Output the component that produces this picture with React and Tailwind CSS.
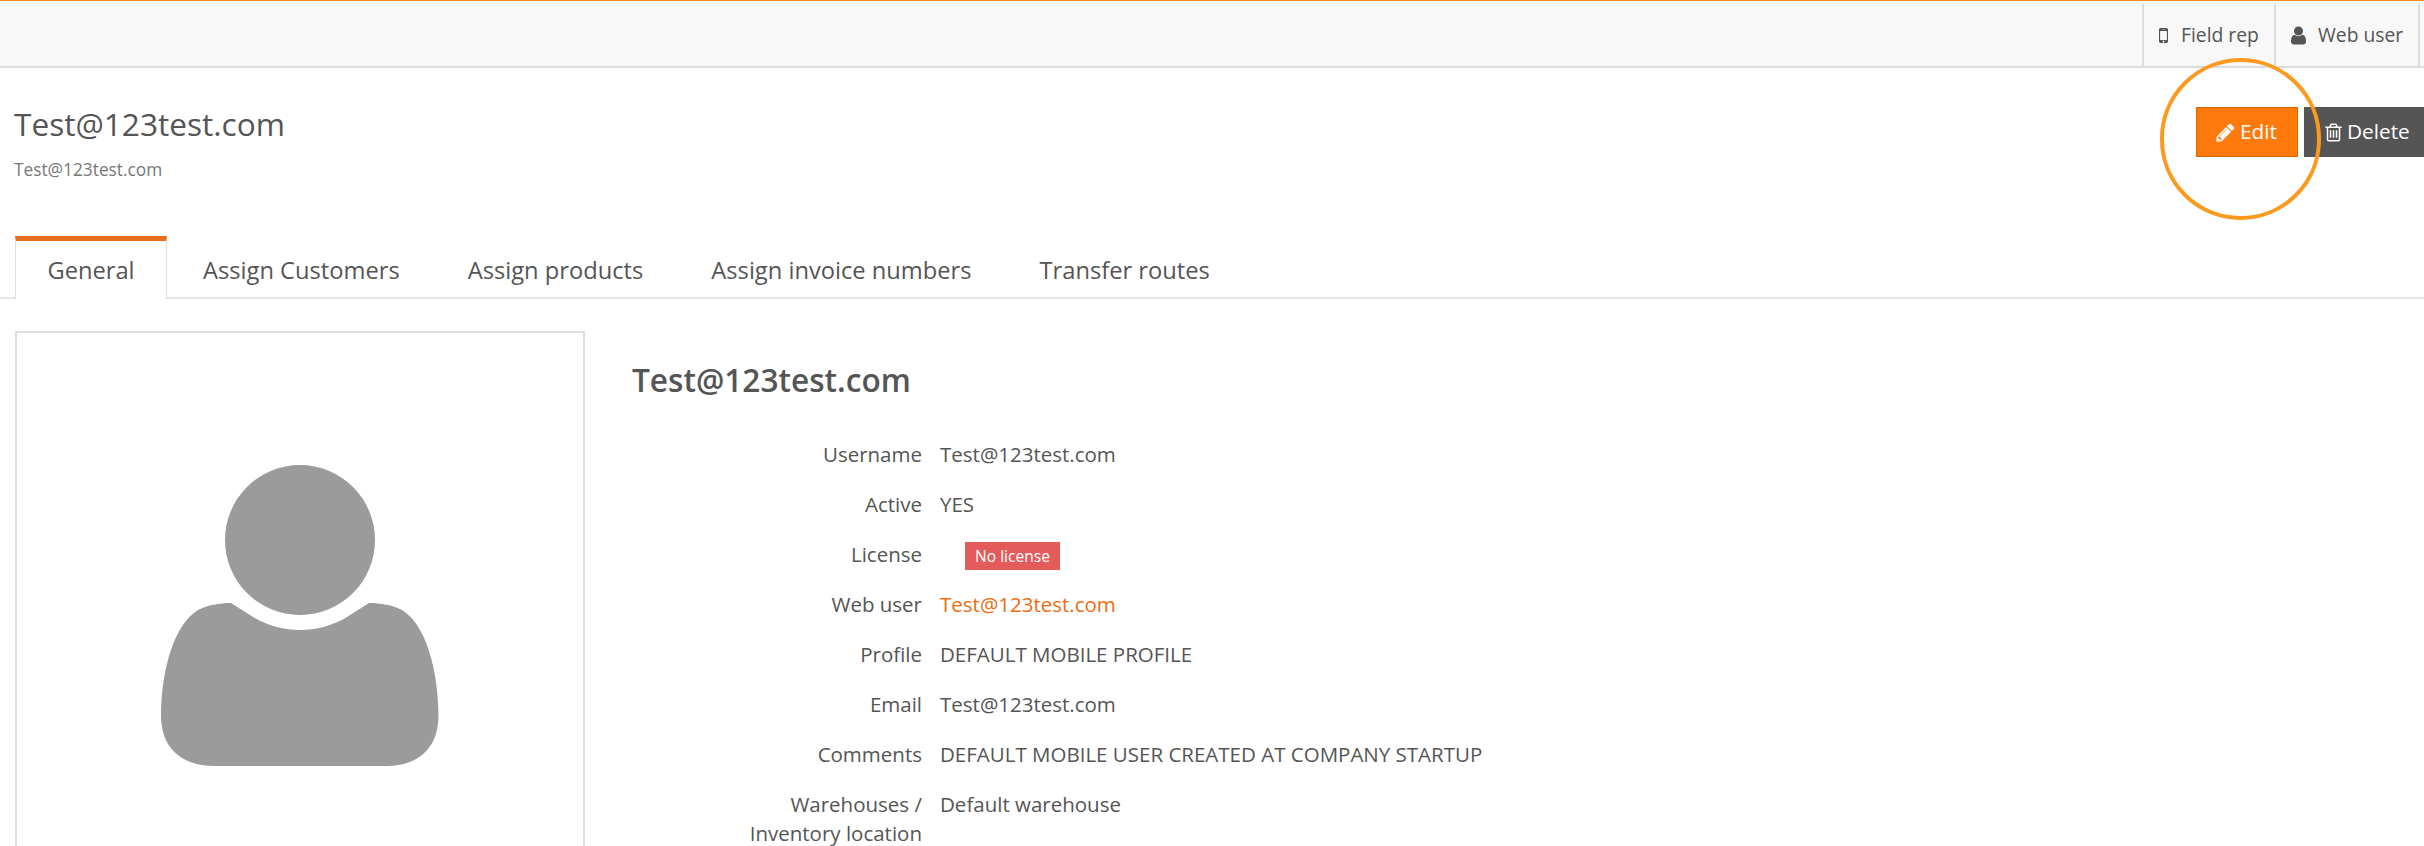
const rows = [
  { label: "Username", value: "Test@123test.com" },
  { label: "Active", value: "YES" },
  { label: "License", badge: "No license" },
  { label: "Web user", value: "Test@123test.com", link: true },
  { label: "Profile", value: "DEFAULT MOBILE PROFILE" },
  { label: "Email", value: "Test@123test.com" },
  { label: "Comments", value: "DEFAULT MOBILE USER CREATED AT COMPANY STARTUP" },
  { label: "Warehouses / Inventory location", value: "Default warehouse" },
];

const tabs = ["Assign Customers", "Assign products", "Assign invoice numbers", "Transfer routes"];

const Icon = ({ d }) => (
  <svg className="h-[21px] w-[21px] shrink-0" viewBox="0 0 1792 1792" fill="currentColor">
    <path d={d} />
  </svg>
);

const mobilePath = "M976 1408q0-33-23.500-56.500t-56.500-23.500-56.500 23.500-23.500 56.500 23.500 56.500 56.500 23.500 56.500-23.500 23.500-56.500zm208-160v-704q0-13-9.500-22.500t-22.500-9.500h-512q-13 0-22.500 9.500t-9.500 22.500v704q0 13 9.500 22.500t22.500 9.500h512q13 0 22.500-9.500t9.500-22.500zm-192-848q0-16-16-16h-160q-16 0-16 16t16 16h160q16 0 16-16zm288-16v1024q0 52-38 90t-90 38h-512q-52 0-90-38t-38-90v-1024q0-52 38-90t90-38h512q52 0 90 38t38 90z";
const userPath = "M1536 1399q0 109-62.500 187t-150.500 78h-854q-88 0-150.500-78t-62.500-187q0-85 8.500-160.500t31.500-152 58.500-131 94-89 134.500-34.500q131 128 313 128t313-128q76 0 134.500 34.500t94 89 58.500 131 31.500 152 8.500 160.500zm-256-887q0 159-112.500 271.500t-271.500 112.500-271.500-112.500-112.500-271.500 112.500-271.500 271.500-112.500 271.500 112.500 112.500 271.500z";
const pencilPath = "M491 1536l91-91-235-235-91 91v107h128v128h107zm523-928q0-22-22-22-10 0-17 7l-542 542q-7 7-7 17 0 22 22 22 10 0 17-7l542-542q7-7 7-17zm-54-192l416 416-832 832h-416v-416zm683 96q0 53-37 90l-166 166-416-416 166-165q36-38 90-38 53 0 91 38l235 234q37 39 37 91z";
const trashPath = "M704 736v576q0 14-9 23t-23 9h-64q-14 0-23-9t-9-23v-576q0-14 9-23t23-9h64q14 0 23 9t9 23zm256 0v576q0 14-9 23t-23 9h-64q-14 0-23-9t-9-23v-576q0-14 9-23t23-9h64q14 0 23 9t9 23zm256 0v576q0 14-9 23t-23 9h-64q-14 0-23-9t-9-23v-576q0-14 9-23t23-9h64q14 0 23 9t9 23zm128 724v-948h-896v948q0 22 7 40.500t14.500 27 10.500 8.500h832q3 0 10.500-8.500t14.500-27 7-40.500zm-672-1076h448l-48-117q-7-9-17-11h-317q-10 2-17 11zm928 32v64q0 14-9 23t-23 9h-96v948q0 83-47 143.500t-113 60.500h-832q-66 0-113-58.500t-47-141.500v-952h-96q-14 0-23-9t-9-23v-64q0-14 9-23t23-9h309l70-167q15-37 54-63t79-26h320q40 0 79 26t54 63l70 167h309q14 0 23 9t9 23z";

const Avatar = () => (
  <svg className="w-[280px] h-[306px]" viewBox="160 460 280 306" fill="#9b9b9b">
    <circle cx="300" cy="538" r="75" />
    <path d="M231 601 L253 615 C268 624 284 628 300 628 C316 628 332 624 347 615 L369 601 C381 601 392 603 402 608 C425 622 438 665 438.5 713 C438.5 745 420 764 386 764 L215 764 C180 764 161 745 161 713 C161.500 665 175 622 198 608 C208 603 219 601 231 601 Z" />
  </svg>
);

const App = () => {
  return (
    <div className="relative h-[846px] w-[2424px] overflow-hidden bg-white text-[#555] font-['Open_Sans',sans-serif]">
      <div className="flex h-[68px] justify-end border-t border-b-2 border-t-[#ff8a1e] border-b-[#dcdcdc] bg-[#f8f8f8] pr-1 pt-[3px]">
        <div className="flex h-full w-[132px] items-center gap-[7px] border-l-2 border-[#dcdcdc] pl-[9px] text-[19.300px]">
          <Icon d={mobilePath} />
          <span>Field rep</span>
        </div>
        <div className="flex h-full w-[146px] items-center gap-[9px] border-x-2 border-[#dcdcdc] pl-[12px] text-[19.300px]">
          <Icon d={userPath} />
          <span>Web user</span>
        </div>
      </div>

      <div className="flex h-[168px] justify-between">
        <div className="pl-[14px] pt-[35px]">
          <h1 className="text-[31.600px] leading-[42px]">Test@123test.com</h1>
          <p className="mt-[15px] text-[17.300px] leading-[20px] text-[#777]">Test@123test.com</p>
        </div>
        <div className="flex gap-[6px] pt-[39px]">
          <button className="flex h-[50px] w-[102px] items-center gap-[4px] border border-[#e56b00] bg-[#ff7a0c] pl-[18px] text-[20.800px] text-white">
            <Icon d={pencilPath} />
            Edit
          </button>
          <button className="flex h-[50px] w-[120px] items-center gap-[3px] bg-[#555] pl-[19px] text-[20.800px] text-white">
            <Icon d={trashPath} />
            Delete
          </button>
        </div>
      </div>

      <div className="flex h-[63px] border-b-2 border-[#e4e4e4] pl-[15px]">
        <div className="mr-[2px] h-[63px] w-[152px] border-x border-t-[5px] border-x-[#e0e0e0] border-t-[#e46d1e] bg-white pt-[13px] text-center text-[23.700px] leading-[32px]">
          General
        </div>
        {tabs.map((tab) => (
          <div key={tab} className="px-[34px] pt-[18px] text-[23.700px] leading-[32px]">
            {tab}
          </div>
        ))}
      </div>

      <div className="flex pl-[15px] pt-[32px]">
        <div className="flex h-[568px] w-[570px] shrink-0 items-center justify-center border-2 border-[#e0e0e0]">
          <Avatar />
        </div>
        <div className="pl-[47px]">
          <h2 className="pt-[28px] text-[31.600px] font-semibold leading-[42px]">Test@123test.com</h2>
          <div className="mt-[38.500px] flex flex-col">
            {rows.map((row) => (
              <div key={row.label} className="flex min-h-[50px] gap-[18px] text-[20.500px] leading-[29px]">
                <div className="ml-[90px] w-[200px] text-right">{row.label}</div>
                <div>
                  {row.badge && (
                    <span className="ml-[25px] inline-block bg-[#e35b5b] px-[10px] text-[15.600px] leading-[28px] text-white">{row.badge}</span>
                  )}
                  {row.value && <span className={row.link ? "text-[#ee6c11]" : ""}>{row.value}</span>}
                </div>
              </div>
            ))}
          </div>
        </div>
      </div>

      {/* annotation circle drawn over the Edit button */}
      <div className="absolute left-[2160px] top-[58px] h-[162px] w-[161px] rounded-full border-[4px] border-[#fb9a1f]" />
    </div>
  );
};

export default App;
